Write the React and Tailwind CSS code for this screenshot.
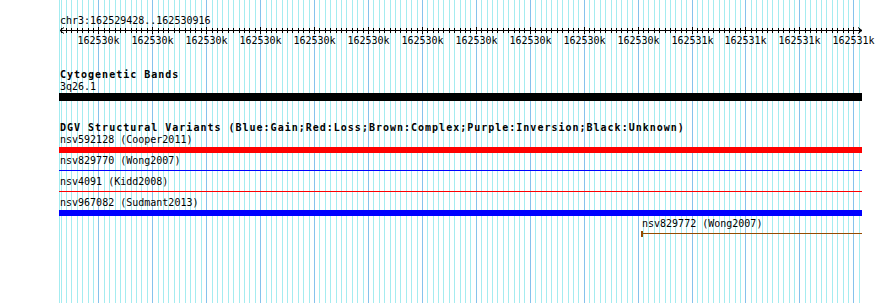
import React from "react";

const START = 162529428;
const END = 162530916;
const X0 = 60;
const SPAN = 803;

const px = (bp) => X0 + ((bp - START) * SPAN) / (END - START + 1);

const roundHalfEven = (v) => {
  const f = Math.floor(v);
  const d = v - f;
  if (d > 0.5) return f + 1;
  if (d < 0.5) return f;
  return f % 2 === 0 ? f : f + 1;
};

const gridBps = [];
for (let bp = 162529430; bp <= 162530910; bp += 10) gridBps.push(bp);

function GridLines() {
  return (
    <svg className="absolute inset-0" width="890" height="303">
      <line x1="59.5" y1="0" x2="59.5" y2="303" stroke="#a4ecf0" strokeWidth="1" />
      {gridBps.map((bp) => {
        const x = Math.floor(px(bp)) + 0.5;
        const major = bp % 100 === 0;
        return (
          <line
            key={bp}
            x1={x}
            y1="0"
            x2={x}
            y2="303"
            stroke={major ? "#86c2ec" : "#a4ecf0"}
            strokeWidth="1"
          />
        );
      })}
    </svg>
  );
}

function Ruler() {
  const off = 59;
  const left = X0 - off;
  const right = 862 - off;
  return (
    <svg width="830" height="22" className="block overflow-visible">
      <line x1={left} y1="3.5" x2={right} y2="3.5" stroke="#000" />
      <polyline points={`${left + 4},0.5 ${left},3.5 ${left + 4},6.5`} fill="none" stroke="#000" />
      <polyline points={`${right - 4},0.5 ${right},3.5 ${right - 4},6.5`} fill="none" stroke="#000" />
      {gridBps.map((bp) => {
        const x = Math.floor(px(bp)) + 0.5 - off;
        const major = bp % 100 === 0;
        return (
          <line
            key={bp}
            x1={x}
            y1={major ? 0 : 1}
            x2={x}
            y2={major ? 7 : 6}
            stroke="#000"
          />
        );
      })}
      {gridBps
        .filter((bp) => bp % 100 === 0)
        .map((bp) => (
          <text
            key={bp}
            x={Math.floor(px(bp)) + 0.5 - off}
            y="17"
            textAnchor="middle"
            fontSize="10"
            fontFamily="'DejaVu Sans Mono', monospace"
            fill="#000"
          >
            {roundHalfEven(bp / 1000)}k
          </text>
        ))}
    </svg>
  );
}

function Label({ children }) {
  return <div className="h-[12px] pl-[1px] text-[10px] leading-[12px] whitespace-nowrap">{children}</div>;
}

function Title({ children }) {
  return (
    <div className="h-[12px] pl-[1px] text-[10px] font-bold leading-[12px] tracking-[1px] whitespace-nowrap">
      {children}
    </div>
  );
}

const variants = [
  { name: "nsv592128 (Cooper2011)", color: "bg-[#ff0000]", thick: true },
  { name: "nsv829770 (Wong2007)", color: "bg-[#0000ff]", thick: false },
  { name: "nsv4091 (Kidd2008)", color: "bg-[#ff0000]", thick: false },
  { name: "nsv967082 (Sudmant2013)", color: "bg-[#0000ff]", thick: true },
];

export default function App() {
  return (
    <div className="relative w-[890px] h-[303px] overflow-hidden bg-white text-black font-['DejaVu_Sans_Mono',monospace]">
      <GridLines />
      <div className="relative w-[862px] pl-[59px] pt-[15px]">
        <Label>chr3:162529428..162530916</Label>
        <Ruler />

        <div className="mt-[20px]">
          <Title>Cytogenetic Bands</Title>
          <Label>3q26.1</Label>
          <div className="h-[8px] bg-black"></div>
        </div>

        <div className="mt-[21px]">
          <Title>DGV Structural Variants (Blue:Gain;Red:Loss;Brown:Complex;Purple:Inversion;Black:Unknown)</Title>
          {variants.map((v) => (
            <div key={v.name} className="mb-[2px]">
              <Label>{v.name}</Label>
              <div className="mt-[1px] h-[6px]">
                {v.thick ? (
                  <div className={`h-[6px] ${v.color}`}></div>
                ) : (
                  <div className="pt-[2px]">
                    <div className={`h-[1px] ${v.color}`}></div>
                  </div>
                )}
              </div>
            </div>
          ))}
          <div className="ml-[582px]">
            <Label>nsv829772 (Wong2007)</Label>
            <div className="mt-[1px] flex h-[6px]">
              <div className="h-[6px] w-[2px] bg-[#964b00]"></div>
              <div className="flex-1 pt-[2px]">
                <div className="h-[1px] bg-[#964b00]"></div>
              </div>
            </div>
          </div>
        </div>
      </div>
    </div>
  );
}
